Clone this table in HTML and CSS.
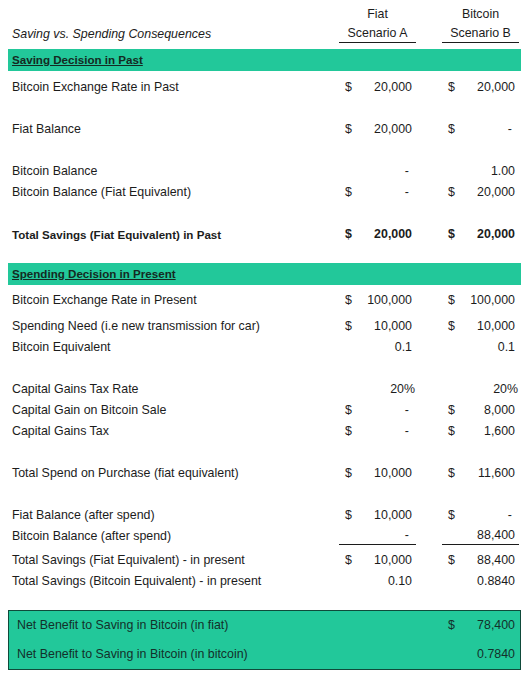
FILE: index.html
```html
<!DOCTYPE html>
<html>
  <head>
    <link rel="stylesheet" href="styles.css">
  </head>
  <body>
    <div class="sheet">
      <div class="row head-top">
        <div class="label"></div>
        <div class="cell center">Fiat</div>
        <div class="cell b center">Bitcoin</div>
      </div>
      <div class="row head-sub">
        <div class="label title">Saving vs. Spending Consequences</div>
        <div class="cell center ruled">Scenario A</div>
        <div class="cell b center ruled">Scenario B</div>
      </div>

      <div class="section first"><span>Saving Decision in Past</span></div>

      <div class="row">
        <div class="label">Bitcoin Exchange Rate in Past</div>
        <div class="cell"><span>$</span><span>20,000</span></div>
        <div class="cell b"><span>$</span><span>20,000</span></div>
      </div>
      <div class="row"></div>
      <div class="row">
        <div class="label">Fiat Balance</div>
        <div class="cell"><span>$</span><span>20,000</span></div>
        <div class="cell b"><span>$</span><span class="dash">-</span></div>
      </div>
      <div class="row"></div>
      <div class="row">
        <div class="label">Bitcoin Balance</div>
        <div class="cell"><span></span><span class="dash">-</span></div>
        <div class="cell b"><span></span><span>1.00</span></div>
      </div>
      <div class="row">
        <div class="label">Bitcoin Balance (Fiat Equivalent)</div>
        <div class="cell"><span>$</span><span class="dash">-</span></div>
        <div class="cell b"><span>$</span><span>20,000</span></div>
      </div>
      <div class="row"></div>
      <div class="row bold">
        <div class="label">Total Savings (Fiat Equivalent) in Past</div>
        <div class="cell"><span>$</span><span>20,000</span></div>
        <div class="cell b"><span>$</span><span>20,000</span></div>
      </div>

      <div class="section second"><span>Spending Decision in Present</span></div>

      <div class="row">
        <div class="label">Bitcoin Exchange Rate in Present</div>
        <div class="cell"><span>$</span><span>100,000</span></div>
        <div class="cell b"><span>$</span><span>100,000</span></div>
      </div>
      <div class="row tall">
        <div class="label">Spending Need (i.e new transmission for car)</div>
        <div class="cell"><span>$</span><span>10,000</span></div>
        <div class="cell b"><span>$</span><span>10,000</span></div>
      </div>
      <div class="row">
        <div class="label">Bitcoin Equivalent</div>
        <div class="cell"><span></span><span>0.1</span></div>
        <div class="cell b"><span></span><span>0.1</span></div>
      </div>
      <div class="row"></div>
      <div class="row">
        <div class="label">Capital Gains Tax Rate</div>
        <div class="cell pct"><span></span><span>20%</span></div>
        <div class="cell b pct"><span></span><span>20%</span></div>
      </div>
      <div class="row">
        <div class="label">Capital Gain on Bitcoin Sale</div>
        <div class="cell"><span>$</span><span class="dash">-</span></div>
        <div class="cell b"><span>$</span><span>8,000</span></div>
      </div>
      <div class="row">
        <div class="label">Capital Gains Tax</div>
        <div class="cell"><span>$</span><span class="dash">-</span></div>
        <div class="cell b"><span>$</span><span>1,600</span></div>
      </div>
      <div class="row"></div>
      <div class="row">
        <div class="label">Total Spend on Purchase (fiat equivalent)</div>
        <div class="cell"><span>$</span><span>10,000</span></div>
        <div class="cell b"><span>$</span><span>11,600</span></div>
      </div>
      <div class="row"></div>
      <div class="row">
        <div class="label">Fiat Balance (after spend)</div>
        <div class="cell"><span>$</span><span>10,000</span></div>
        <div class="cell b"><span>$</span><span class="dash">-</span></div>
      </div>
      <div class="row short">
        <div class="label">Bitcoin Balance (after spend)</div>
        <div class="cell ruled"><span></span><span class="dash">-</span></div>
        <div class="cell b ruled"><span></span><span>88,400</span></div>
      </div>
      <div class="row wide">
        <div class="label">Total Savings (Fiat Equivalent) - in present</div>
        <div class="cell"><span>$</span><span>10,000</span></div>
        <div class="cell b"><span>$</span><span>88,400</span></div>
      </div>
      <div class="row">
        <div class="label">Total Savings (Bitcoin Equivalent) - in present</div>
        <div class="cell"><span></span><span>0.10</span></div>
        <div class="cell b"><span></span><span>0.8840</span></div>
      </div>

      <div class="summary">
        <div class="row">
          <div class="label">Net Benefit to Saving in Bitcoin (in fiat)</div>
          <div class="cell"></div>
          <div class="cell b"><span>$</span><span>78,400</span></div>
        </div>
        <div class="row">
          <div class="label">Net Benefit to Saving in Bitcoin (in bitcoin)</div>
          <div class="cell"></div>
          <div class="cell b"><span></span><span>0.7840</span></div>
        </div>
      </div>
    </div>
  </body>
</html>
```

FILE: styles.css
```css
body {
  margin: 0;
  background-color: #ffffff;
  font-family: "Liberation Sans", Arial, sans-serif;
  font-size: 12.4px;
  color: #1c1c1c;
}

.sheet {
  width: 513px;
  margin-left: 8px;
  padding-top: 3px;
}

.row {
  display: flex;
  align-items: flex-end;
  height: 21px;
}

.row > div {
  line-height: 19px;
}

.row.tall {
  height: 26px;
}

.row.short {
  height: 20px;
}

.row.short > div {
  line-height: 17px;
}

.row.wide {
  height: 25px;
}

.row.bold {
  font-weight: bold;
}

.row.bold .label {
  font-size: 11.6px;
}

.label {
  width: 331px;
  padding-left: 4px;
  box-sizing: border-box;
  white-space: nowrap;
}

.title {
  font-style: italic;
}

.cell {
  width: 77px;
  box-sizing: border-box;
  display: flex;
  justify-content: space-between;
  padding: 0 4px 0 6px;
}

.cell.b {
  margin-left: 26px;
}

.cell.pct {
  padding-right: 1px;
}

.cell.center {
  justify-content: center;
  padding: 0;
}

.dash {
  padding-right: 3px;
}

.head-sub {
  height: 19px;
}

.head-sub > div {
  line-height: 17px;
}

.ruled {
  border-bottom: 1px solid #1c1c1c;
}

.section {
  background-color: #22c89a;
  height: 22px;
  line-height: 22px;
  padding-left: 4px;
  font-size: 11.6px;
  font-weight: bold;
  color: #142a22;
  margin-bottom: 5px;
}

.section span {
  text-decoration: underline;
}

.section.first {
  margin-top: 6px;
}

.section.second {
  margin-top: 19px;
  margin-bottom: 4px;
}

.summary {
  margin-top: 19px;
  background-color: #22c89a;
  border: 1px solid #0f4a3a;
  color: #13302a;
}

.summary .row {
  height: 29px;
  align-items: center;
}

.summary .row > div {
  line-height: 29px;
}

.summary .label {
  width: 330px;
  padding-left: 8px;
}
```
